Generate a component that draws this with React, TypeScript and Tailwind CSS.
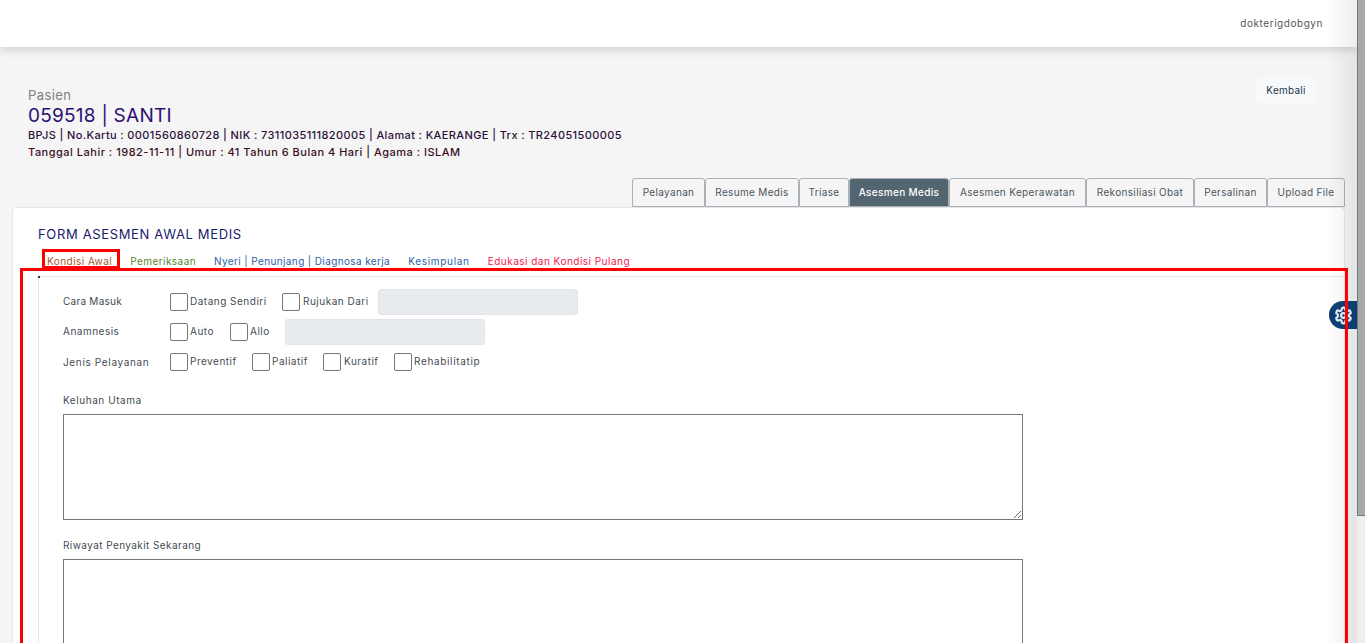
const tabs = [
  { label: "Pelayanan", w: "w-[73px]" },
  { label: "Resume Medis", w: "w-[94px]" },
  { label: "Triase", w: "w-[50px]" },
  { label: "Asesmen Medis", w: "w-[100px]" },
  { label: "Asesmen Keperawatan", w: "w-[137px]" },
  { label: "Rekonsiliasi Obat", w: "w-[108px]" },
  { label: "Persalinan", w: "w-[73px]" },
  { label: "Upload File", w: "w-[78px]" },
];

function Check({ label, className, wide }: { label: string; className: string; wide?: boolean }) {
  return (
    <label className={"flex items-center " + className}>
      <span className={"w-[18px] h-[18px] bg-white border border-[#767676] rounded-[2px] shrink-0 " + (wide ? "mr-[3px]" : "mr-[2px]")} />
      <span className="whitespace-nowrap -mt-[1px]">{label}</span>
    </label>
  );
}

export default function App() {
  return (
    <div className="relative h-[643px] overflow-hidden flex bg-[#f5f5f5] font-['Inter',sans-serif] text-[10px] text-[#444c54]">
      <main className="w-[1357px] shrink-0">
        {/* top bar */}
        <header className="h-[47px] bg-white shadow-[0_2px_10px_rgba(0,0,0,0.18)] flex items-center justify-end pr-[34px]">
          <span className="text-[10px] tracking-[0.55px] text-[#555]">dokterigdobgyn</span>
        </header>

        {/* patient info */}
        <section className="flex justify-between pl-[28px] pr-[41px] pt-[35px]">
          <div>
            <p className="text-[13px] leading-[30px] h-[30px] text-[#7a8087] -mt-[2px] tracking-[0.4px]">Pasien</p>
            <h1 className="text-[19px] leading-[20px] -mt-[4px] text-[#2b0f73] tracking-[0.25px]">059518 | SANTI</h1>
            <p className="text-[11px] leading-[18px] font-medium text-[#2c1238] tracking-[0.385px]">BPJS | No.Kartu : 0001560860728 | NIK : 7311035111820005 | Alamat : KAERANGE | Trx : TR24051500005</p>
            <p className="text-[11px] leading-[17px] font-medium text-[#3a0f1f] tracking-[0.5px]">Tanggal Lahir : 1982-11-11 | Umur : 41 Tahun 6 Bulan 4 Hari | Agama : ISLAM</p>
          </div>
          <button className="h-[25px] w-[60px] -mt-[4px] rounded-[3px] bg-[#f8f9fa] text-[10px] text-[#1c3550] tracking-[0.25px]">Kembali</button>
        </section>

        {/* tabs */}
        <nav className="flex justify-end pr-[12px] mt-[17px]">
          {tabs.map((t) => (
            <button
              key={t.label}
              className={
                "h-[29px] border border-[#aab2b8] rounded-t-[3px] text-[10px] tracking-[0.33px] whitespace-nowrap text-center " +
                t.w +
                " " +
                (t.label === "Asesmen Medis" ? "bg-[#526570] text-white font-medium" : "bg-[#f5f5f5] text-[#4b5560]")
              }
            >
              {t.label}
            </button>
          ))}
        </nav>

        {/* form card */}
        <section className="mx-[12px] bg-white border border-[#e3e6ea] rounded-t-[4px] h-[600px] pt-[18px]">
          <h2 className="ml-[25px] text-[13px] leading-[16px] text-[#1a1a6e] tracking-[0.65px]">FORM ASESMEN AWAL MEDIS</h2>
          <div className="flex ml-[34px] mt-[8px] mb-[4px] h-[22px] items-center gap-[18px] text-[10px] whitespace-nowrap">
            <span className="text-[#a5562f] tracking-[0.45px]">Kondisi Awal</span>
            <span className="text-[#55872e] tracking-[0.45px]">Pemeriksaan</span>
            <span className="text-[#2b5ea8] tracking-[0.38px]">Nyeri | Penunjang | Diagnosa kerja</span>
            <span className="text-[#2a62a8] tracking-[0.7px]">Kesimpulan</span>
            <span className="text-[#f0204f] tracking-[0.48px]">Edukasi dan Kondisi Pulang</span>
          </div>

          <div className="relative ml-[25px] mr-0 border-l border-t border-[#e3e6ea] rounded-tl-[3px] h-[500px] pl-[24px] pt-[11px] tracking-[0.5px]">
            <span className="absolute -left-px -top-px w-[2px] h-[2px] bg-[#1c3550]" />
            <div className="flex items-center h-[27px]">
              <span className="w-[107px] -mt-[1px] tracking-[0.25px]">Cara Masuk</span>
              <Check label="Datang Sendiri" className="w-[112px]" />
              <Check label="Rujukan Dari" className="w-[96px]" wide />
              <div className="w-[200px] h-[26px] bg-[#e9ecef] border border-[#e1e4e8] rounded-[3px]" />
            </div>
            <div className="flex items-center h-[27px] mt-[3px]">
              <span className="w-[107px]">Anamnesis</span>
              <Check label="Auto" className="w-[60px]" />
              <Check label="Allo" className="w-[55px]" />
              <div className="w-[200px] h-[26px] bg-[#e9ecef] border border-[#e1e4e8] rounded-[3px]" />
            </div>
            <div className="flex items-center h-[18px] mt-[8px]">
              <span className="w-[107px] tracking-[0.65px]">Jenis Pelayanan</span>
              <Check label="Preventif" className="w-[82px]" />
              <Check label="Paliatif" className="w-[71px]" />
              <Check label="Kuratif" className="w-[71px]" wide />
              <Check label="Rehabilitatip" className="w-[100px] tracking-[0.65px]" />
            </div>

            <label className="block mt-[22px] leading-[14px] tracking-[0.55px]">Keluhan Utama</label>
            <textarea className="block mt-[7px] w-[960px] h-[106px] bg-white border border-[#767676] outline-none" />

            <label className="block mt-[18px] leading-[14px] tracking-[0.42px]">Riwayat Penyakit Sekarang</label>
            <textarea className="block mt-[7px] w-[960px] h-[106px] bg-white border border-[#767676] outline-none" />
          </div>
        </section>
      </main>

      {/* scrollbar */}
      <div className="w-[8px] shrink-0 bg-[#efefef]">
        <div className="h-[516px] bg-[#a8a8a8] border-l border-b border-[#6e7a80]" />
      </div>

      {/* soft shadow of the closed side panel */}
      <div className="absolute left-[1327px] top-0 w-[30px] h-full bg-gradient-to-r from-transparent to-[rgba(0,0,0,0.07)] pointer-events-none" />

      {/* floating settings button */}
      <div className="absolute left-[1329px] top-[301px] w-[28px] h-[28px] rounded-l-full bg-[#0e3f73] flex items-center justify-start pl-[5px]">
        <svg width="19" height="19" viewBox="0 0 24 24" fill="none" stroke="#dfe7ef" strokeWidth="2.8" strokeLinecap="round" strokeLinejoin="round">
          <path d="M12.22 2h-.44a2 2 0 0 0-2 2v.18a2 2 0 0 1-1 1.73l-.43.25a2 2 0 0 1-2 0l-.15-.08a2 2 0 0 0-2.73.73l-.22.38a2 2 0 0 0 .73 2.73l.15.1a2 2 0 0 1 1 1.72v.51a2 2 0 0 1-1 1.74l-.15.09a2 2 0 0 0-.73 2.73l.22.38a2 2 0 0 0 2.73.73l.15-.08a2 2 0 0 1 2 0l.43.25a2 2 0 0 1 1 1.73V20a2 2 0 0 0 2 2h.44a2 2 0 0 0 2-2v-.18a2 2 0 0 1 1-1.73l.43-.25a2 2 0 0 1 2 0l.15.08a2 2 0 0 0 2.73-.73l.22-.39a2 2 0 0 0-.73-2.73l-.15-.08a2 2 0 0 1-1-1.74v-.5a2 2 0 0 1 1-1.74l.15-.09a2 2 0 0 0 .73-2.73l-.22-.38a2 2 0 0 0-2.73-.73l-.15.08a2 2 0 0 1-2 0l-.43-.25a2 2 0 0 1-1-1.73V4a2 2 0 0 0-2-2z" />
          <circle cx="12" cy="12" r="3" />
        </svg>
      </div>

      {/* red annotation boxes */}
      <div className="absolute left-[42px] top-[249px] w-[78px] h-[20px] border-[3px] border-[#ff0000] pointer-events-none" />
      <div className="absolute left-[20px] top-[268px] w-[1328px] h-[400px] border-[3px] border-[#ff0000] pointer-events-none" />
    </div>
  );
}
